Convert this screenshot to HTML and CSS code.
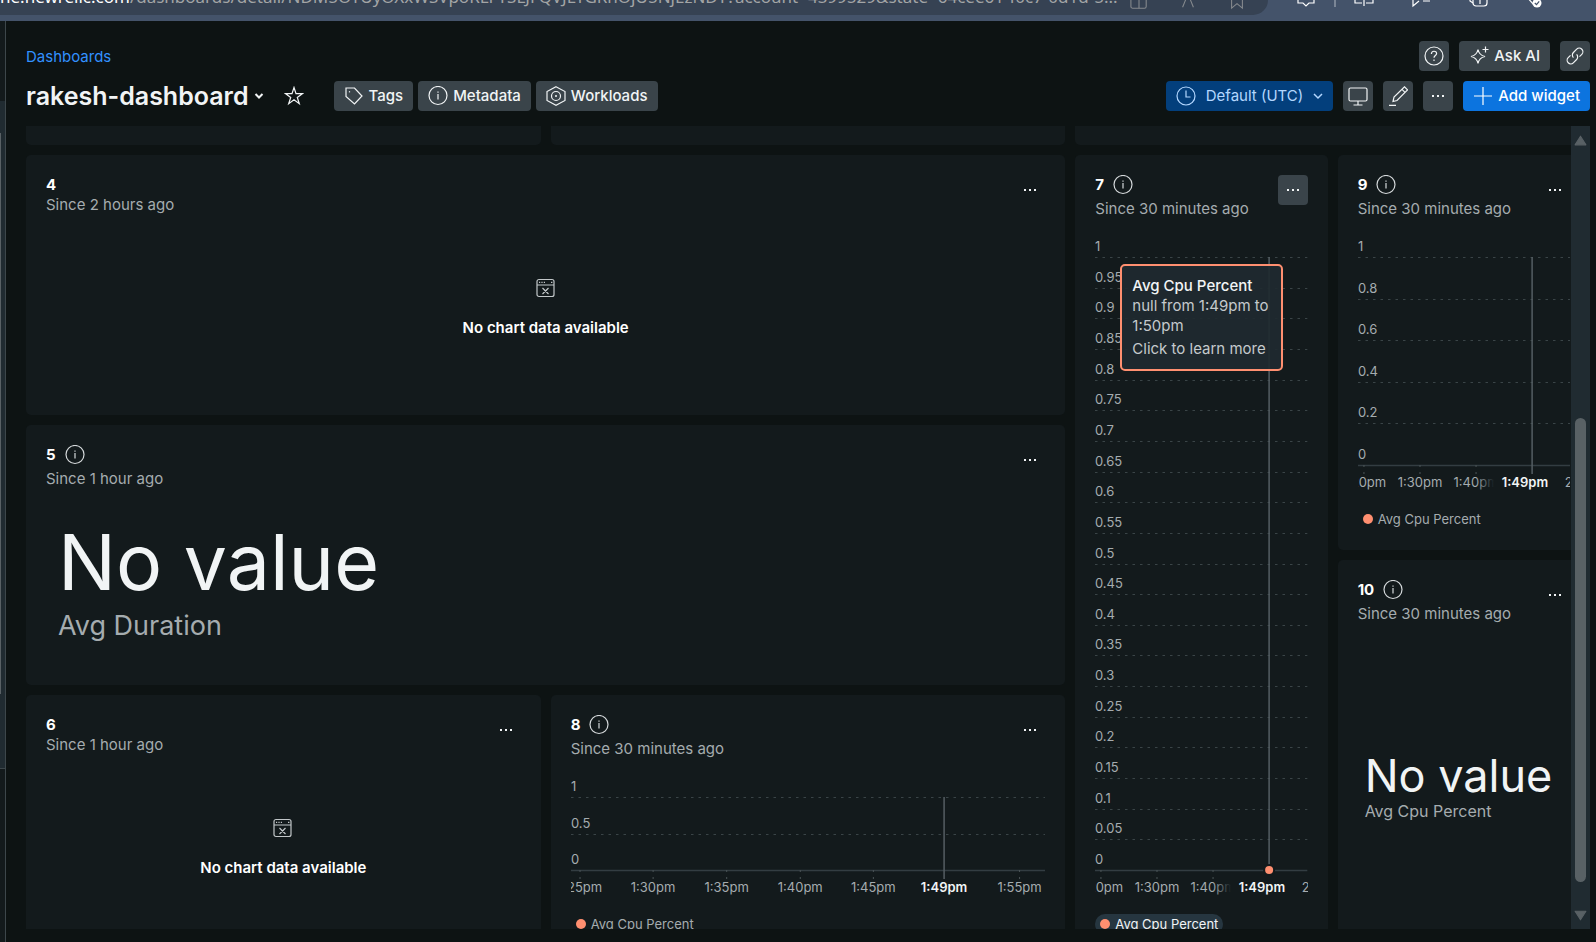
FILE: index.html
```html
<!DOCTYPE html>
<html lang="en">
<head>
<meta charset="utf-8">
<title>rakesh-dashboard</title>
<link rel="stylesheet" href="styles.css">
</head>
<body>
<svg class="defs" aria-hidden="true">
  <symbol id="info" viewBox="0 0 20 20"><circle cx="10" cy="9.500" r="9"/><path d="M10 8.100v5.400M10 5.500v1.200"/></symbol>
  <symbol id="dots" viewBox="0 0 20 20"><path class="solid" d="M4 9h2v2H4zM9 9h2v2H9zM14 9h2v2h-2z"/></symbol>
  <symbol id="nodata" viewBox="0 0 20 20"><rect x="1" y="1.500" width="17" height="17" rx="2"/><path d="M1 7h17M6.500 10l6 6M12.500 10l-6 6M3 4.300h1.200M5.400 4.300h1.200M7.800 4.300H9M15 4.300h1.400"/></symbol>
</svg>

<div class="browser">
  <div class="address">
    <span class="url"><b>ne.newrelic.com</b>/dashboards/detail/NDM5OTUyOXxWSVpoRLFYSLJFQVJLTGRhOjU5NjEzNDY?account=4399529&amp;state=64cee61-f0c7-0d1d-5...</span>
    <span class="address-icons">
      <svg class="ic" viewBox="0 0 20 20"><rect x="1" y="1" width="17" height="17" rx="2"/><path d="M10 1v17M1 8h17"/></svg>
      <svg class="ic" viewBox="0 0 20 20"><path d="M4 17L10 2l6 15"/></svg>
      <svg class="ic" viewBox="0 0 20 20"><path d="M4 1h12v17l-6-5-6 5z"/></svg>
    </span>
  </div>
  <div class="browser-icons">
    <svg class="ic" viewBox="0 0 20 20"><path d="M2 2v13h5l3 3 3-3h5V2"/></svg>
    <span class="bar-sep"></span>
    <svg class="ic" viewBox="0 0 20 20"><path d="M10 1v17M8 15H1V3M12 15h7V3"/></svg>
    <svg class="ic" viewBox="0 0 20 20"><path d="M2 2v16l6-5M12 13h7M12 9h7"/></svg>
    <svg class="ic" viewBox="0 0 20 20"><rect x="5" y="3" width="14" height="15" rx="3"/><path d="M2 5v8l3 2M12 7v9M8 11h8"/></svg>
    <svg class="ic" viewBox="0 0 20 20"><path d="M1 8l8 9"/><circle class="solid" cx="12" cy="15" r="4.500"/><path class="tick" d="M9.800 15l1.700 1.700 2.700-3.400"/></svg>
  </div>
</div>

<div class="app">
  <div class="rail"><div class="rail-top"></div><div class="rail-scroll"><span></span></div><div class="rail-end"></div></div>
  <main class="main">
    <header class="top">
      <div class="row">
        <a class="crumb" href="#">Dashboards</a>
        <div class="tools">
          <button class="btn square" aria-label="Help"><svg class="ic" viewBox="0 0 20 20"><circle cx="10" cy="10" r="9"/><path d="M7.400 8c0-3.600 5.200-3.600 5.200-.4 0 2-2.600 2-2.600 4.200M10 13.600v1.400"/></svg></button>
          <button class="btn"><svg class="ic" viewBox="0 0 20 20"><path d="M9 3.500c.8 4.300 2.600 6.100 7 7-4.400.9-6.200 2.700-7 7-.8-4.300-2.600-6.100-7-7 4.400-.9 6.200-2.700 7-7zM16.500.5v6M13.500 3.500h6"/></svg>Ask AI</button>
          <button class="btn square" aria-label="Copy link"><svg class="ic" viewBox="0 0 20 20"><path d="M8.400 11.600a3.600 3.600 0 0 1 0-5.100l3.300-3.300a3.600 3.600 0 0 1 5.100 5.100l-2.300 2.300M11.600 8.400a3.600 3.600 0 0 1 0 5.100l-3.300 3.300a3.600 3.600 0 0 1-5.100-5.100l2.300-2.300"/></svg></button>
        </div>
      </div>
      <div class="row">
        <div class="heading">
          <h1>rakesh-dashboard</h1>
          <svg class="caret" viewBox="0 0 10 10"><path d="M1.500 3L5 6.500 8.500 3"/></svg>
          <button class="star" aria-label="Favorite"><svg class="ic" viewBox="0 0 20 20"><path d="M10 1.500l2 6.100h6.500l-5.200 3.800 2 6.300-5.300-3.900-5.300 3.900 2-6.300L1.500 7.600H8z"/></svg></button>
          <div class="chips">
            <button class="btn"><svg class="ic" viewBox="0 0 20 20"><path d="M2 2h8.500l7.500 8-7.500 8L2 10.500z"/><path d="M5.500 5.200v1.200"/></svg>Tags</button>
            <button class="btn"><svg class="ic"><use href="#info"/></svg>Metadata</button>
            <button class="btn"><svg class="ic" viewBox="0 0 20 20"><path d="M10 .8l9 4.700v9l-9 4.700-9-4.700v-9z"/><circle cx="10" cy="10" r="4.500"/><circle class="solid" cx="10" cy="10" r="1"/></svg>Workloads</button>
          </div>
        </div>
        <div class="tools">
          <button class="btn time"><svg class="ic" viewBox="0 0 20 20"><circle cx="10" cy="10" r="9"/><path d="M10 4.500V11h4.500"/></svg><span>Default (UTC)</span><svg class="chev" viewBox="0 0 10 10"><path d="M1 3l4 4 4-4"/></svg></button>
          <button class="btn square" aria-label="TV mode"><svg class="ic" viewBox="0 0 20 20"><rect x="1" y="2" width="18" height="13" rx="1.500"/><path d="M10 15v4M5.500 19h9"/></svg></button>
          <button class="btn square" aria-label="Edit"><svg class="ic" viewBox="0 0 20 20"><path d="M5 15.500l1-4.500L16.500.8l3 3L9 14.500zM14 3.300l3 3M1 19.300h7"/></svg></button>
          <button class="btn square" aria-label="More"><svg class="ic"><use href="#dots"/></svg></button>
          <button class="btn primary"><svg class="ic" viewBox="0 0 20 20"><path d="M10 1v18M1 10h18"/></svg>Add widget</button>
        </div>
      </div>
    </header>

    <div class="board">
      <div class="grid">
        <section class="card stub"></section><section class="card stub"></section><section class="card stub"></section>

        <section class="card w4">
          <div class="head"><div><h2>4</h2><p>Since 2 hours ago</p></div><button class="menu" aria-label="Widget menu"><svg class="ic"><use href="#dots"/></svg></button></div>
          <div class="empty"><svg class="ic"><use href="#nodata"/></svg><strong>No chart data available</strong></div>
        </section>

        <section class="card w5">
          <div class="head"><div><h2>5 <svg class="ic"><use href="#info"/></svg></h2><p>Since 1 hour ago</p></div><button class="menu" aria-label="Widget menu"><svg class="ic"><use href="#dots"/></svg></button></div>
          <div class="billboard large"><span>No value</span><small>Avg Duration</small></div>
        </section>

        <section class="card w6">
          <div class="head"><div><h2>6</h2><p>Since 1 hour ago</p></div><button class="menu" aria-label="Widget menu"><svg class="ic"><use href="#dots"/></svg></button></div>
          <div class="empty"><svg class="ic"><use href="#nodata"/></svg><strong>No chart data available</strong></div>
        </section>

        <section class="card w8">
          <div class="head"><div><h2>8 <svg class="ic"><use href="#info"/></svg></h2><p>Since 30 minutes ago</p></div><button class="menu" aria-label="Widget menu"><svg class="ic"><use href="#dots"/></svg></button></div>
          <svg class="chart short" data-max="1" data-step="0.5" data-top="22" data-base="95" data-cross="78.6%"
            data-x='[["1:25pm","1.900%"],["1:30pm","17.300%"],["1:35pm","32.800%"],["1:40pm","48.300%"],["1:45pm","63.700%"],["1:49pm","78.600%","now"],["1:55pm","94.500%"]]'></svg>
          <div class="legend"><span class="key"><i></i>Avg Cpu Percent</span></div>
        </section>

        <section class="card w7">
          <div class="head"><div><h2>7 <svg class="ic"><use href="#info"/></svg></h2><p>Since 30 minutes ago</p></div><button class="menu active" aria-label="Widget menu"><svg class="ic"><use href="#dots"/></svg></button></div>
          <svg class="chart tall" data-max="1" data-step="0.05" data-top="22" data-base="635" data-cross="82%" data-dot="1"
            data-x='[["1:20pm","2.800%"],["1:30pm","29.200%"],["1:40pm","55.600%","fade"],["1:49pm","78.600%","now"],["2:00pm","108.500%"]]'></svg>
          <div class="legend"><span class="key on"><i></i>Avg Cpu Percent</span></div>
          <div class="tooltip" role="tooltip"><b>Avg Cpu Percent</b><span>null from 1:49pm to 1:50pm</span><em>Click to learn more</em></div>
        </section>

        <section class="card w9">
          <div class="head"><div><h2>9 <svg class="ic"><use href="#info"/></svg></h2><p>Since 30 minutes ago</p></div><button class="menu" aria-label="Widget menu"><svg class="ic"><use href="#dots"/></svg></button></div>
          <svg class="chart mid" data-max="1" data-step="0.2" data-top="22" data-base="230" data-cross="82%"
            data-x='[["1:20pm","2.800%"],["1:30pm","29.200%"],["1:40pm","55.600%","fade"],["1:49pm","78.600%","now"],["2:00pm","108.500%"]]'></svg>
          <div class="legend"><span class="key"><i></i>Avg Cpu Percent</span></div>
        </section>

        <section class="card w10">
          <div class="head"><div><h2>10 <svg class="ic"><use href="#info"/></svg></h2><p>Since 30 minutes ago</p></div><button class="menu" aria-label="Widget menu"><svg class="ic"><use href="#dots"/></svg></button></div>
          <div class="billboard"><span>No value</span><small>Avg Cpu Percent</small></div>
        </section>
      </div>
      <div class="scrollbar">
        <svg viewBox="0 0 12 10"><path d="M6 1l5 8H1z"/></svg>
        <div class="track"><span></span></div>
        <svg viewBox="0 0 12 10"><path d="M6 9L1 1h10z"/></svg>
      </div>
    </div>
  </main>
</div>
<script src="charts.js"></script>
</body>
</html>
```

FILE: styles.css
```css
* { box-sizing: border-box; }
body {
  margin: 0;
  height: 100vh;
  display: flex;
  flex-direction: column;
  overflow: hidden;
  background: #0d1313;
  color: #f1f4f5;
  font: 400 15px/20px Inter, "Liberation Sans", sans-serif;
}
h1, h2, p { margin: 0; }
button { font: inherit; color: inherit; border: 0; background: none; padding: 0; }
.defs { position: absolute; width: 0; height: 0; }
.ic { width: 20px; height: 20px; flex: none; fill: none; stroke: currentColor; stroke-width: 1.2; }
.solid { fill: currentColor; stroke: none; }

/* browser toolbar */
.browser { display: flex; flex: none; height: 21px; background: #44536a; }
.address {
  flex: 1;
  height: 15px;
  display: flex;
  justify-content: space-between;
  align-items: flex-end;
  overflow: hidden;
  background: #364253;
  border-bottom-right-radius: 16px;
  color: #a3a5a6;
}
.url { font: 17px/24px "Noto Sans", "Open Sans", sans-serif; white-space: nowrap; padding-bottom: 6px; }
.url b { font-weight: 400; color: #fff; }
.address-icons { display: flex; gap: 31px; padding-right: 22px; color: #85898d; }
.address-icons .ic { width: 18px; height: 28px; }
.browser-icons {
  display: flex;
  align-items: flex-start;
  gap: 37px;
  width: 328px;
  height: 8px;
  padding-left: 28px;
  color: #fff;
}
.browser-icons .ic { margin-top: -12px; }
.bar-sep { width: 2px; height: 7px; background: #7b8696; margin: 0 -19px; }
.tick { stroke: #44536a; }

/* app frame */
.app { flex: 1; display: flex; min-height: 0; }
.rail { width: 6px; flex: none; display: flex; flex-direction: column; border-right: 1px solid #3d474b; }
.rail-top { height: 80px; background: #131a1c; }
.rail-scroll { height: 668px; background: #202b31; border-bottom: 1px solid #3d474b; padding: 32px 0 74px; }
.rail-scroll span { display: block; width: 1px; height: 100%; background: #596165; }
.rail-end { flex: 1; background: #131a1c; }
.main { flex: 1; min-width: 0; display: flex; flex-direction: column; padding: 20px 6px 13px 20px; }
.top { display: flex; flex-direction: column; gap: 10px; margin-bottom: 15px; }
.row { display: flex; justify-content: space-between; align-items: center; }
.tools, .chips, .heading { display: flex; align-items: center; }
.tools { gap: 10px; }
.chips { gap: 5px; margin-left: 30px; }
.crumb { padding-top: 2px; color: #3291ff; text-decoration: none; }
h1 { font-size: 25px; line-height: 30px; font-weight: 600; }
.caret { width: 10px; height: 10px; margin: 0 20px 0 5px; fill: none; stroke: currentColor; stroke-width: 2; }
.star { display: flex; }
.btn {
  display: flex;
  align-items: center;
  gap: 5px;
  height: 30px;
  padding: 0 10px;
  border-radius: 4px;
  background: #3a444a;
  font-weight: 500;
}
.btn.square { width: 30px; padding: 0 5px; }
.btn.primary { background: #0c74df; color: #fff; }
.btn.time { background: #033f7c; color: #b3d7ff; font-weight: 400; gap: 10px; }
.chev { width: 10px; height: 10px; fill: none; stroke: currentColor; stroke-width: 1.5; }

/* widget board */
.board { position: relative; flex: 1; min-height: 0; overflow: hidden; }
.grid {
  display: grid;
  grid-template-columns: repeat(6, minmax(0, 1fr));
  grid-template-rows: 19px repeat(6, 125px);
  gap: 10px;
}
.card { position: relative; display: flex; flex-direction: column; padding: 20px; border-radius: 5px; background: #131a1c; }
.stub { grid-column: span 2; border-radius: 0 0 5px 5px; padding: 0; }
.w4 { grid-area: 2 / 1 / span 2 / span 4; }
.w5 { grid-area: 4 / 1 / span 2 / span 4; }
.w6 { grid-area: 6 / 1 / span 2 / span 2; }
.w8 { grid-area: 6 / 3 / span 2 / span 2; }
.w7 { grid-area: 2 / 5 / span 6 / span 1; }
.w9 { grid-area: 2 / 6 / span 3 / span 1; }
.w10 { grid-area: 5 / 6 / span 3 / span 1; }
.head { display: flex; justify-content: space-between; align-items: flex-start; height: 40px; white-space: nowrap; }
.head p { color: #a5acaf; }
h2 { display: flex; gap: 9px; font-size: 15px; line-height: 20px; font-weight: 700; color: #fff; }
h2:has(svg) { margin-bottom: 4px; }
h2 .ic { color: #d5d9db; }
.menu { width: 30px; height: 30px; padding: 5px; border-radius: 4px; flex: none; }
.menu.active { background: #3a444a; }

.empty { flex: 1; display: flex; flex-direction: column; align-items: center; gap: 20px; padding-top: 63px; }
.empty .ic { color: #c2c7c9; }
.empty strong { font-weight: 600; color: #fff; }

.billboard {
  flex: 1;
  display: flex;
  flex-direction: column;
  justify-content: center;
  padding: 16px 7px 0;
  white-space: nowrap;
}
.billboard span { font-size: 45px; line-height: 50px; }
.billboard small { font-size: 16px; line-height: 20px; color: #a5acaf; }
.billboard.large { padding: 8px 12px 0; }
.billboard.large span { font-size: 77px; line-height: 94px; }
.billboard.large small { font-size: 27px; line-height: 34px; }

/* charts */
.chart { width: 100%; flex: none; margin-top: 20px; overflow: hidden; }
.tall { height: 670px; }
.mid { height: 265px; }
.short { height: 130px; }
.chart text { font-size: 13px; fill: #a5acaf; }
.chart .x { text-anchor: middle; }
.chart .now { fill: #f1f4f5; font-weight: 600; }
.chart .gridline { stroke: #3a4447; stroke-width: 1; stroke-dasharray: 2.5 5; }
.chart .axis { stroke: #333d42; stroke-width: 1.5; }
.chart .mark { stroke: #4b5457; stroke-width: 1; stroke-dasharray: 2 5; }
.chart .cross { stroke: #555e63; stroke-width: 1.5; }
.chart .dot { fill: #ff8f70; stroke: #131a1c; stroke-width: 4; paint-order: stroke; }
.legend { margin-top: 9px; display: flex; font-size: 13px; white-space: nowrap; color: #a5acaf; }
.key { display: flex; align-items: center; gap: 5px; padding: 0 5px; border-radius: 10px; }
.key i { width: 10px; height: 10px; border-radius: 50%; background: #ff8f70; }
.key.on { background: #263640; color: #f1f4f5; }

.tooltip {
  position: absolute;
  top: 109px;
  left: 45px;
  width: 163px;
  padding: 10px;
  border: 2px solid #ff8f70;
  border-radius: 5px;
  background: rgba(31, 42, 47, .93);
  color: #c5cacc;
}
.tooltip b, .tooltip span, .tooltip em { display: block; font-style: normal; white-space: normal; }
.tooltip span { margin-right: -5px; }
.tooltip b { font-weight: 500; color: #f1f4f5; }
.tooltip em { margin-top: 3px; }

/* scrollbar over the right edge of the board */
.scrollbar {
  position: absolute;
  inset: 0 0 0 auto;
  width: 19px;
  padding: 9px 3px 8px;
  display: flex;
  flex-direction: column;
  align-items: center;
  background: #202b31;
}
.scrollbar svg { width: 13px; height: 11px; fill: #596165; stroke: #596165; stroke-width: 1; stroke-linejoin: round; flex: none; }
.track { flex: 1; display: flex; flex-direction: column; justify-content: flex-end; padding-bottom: 28px; }
.track span { width: 11px; height: 63%; border-radius: 6px; background: #596165; }
```

FILE: charts.js
```js
const NS = "http://www.w3.org/2000/svg";

function add(parent, tag, attrs, text) {
  const el = document.createElementNS(NS, tag);
  for (const k in attrs) el.setAttribute(k, attrs[k]);
  if (text !== undefined) el.textContent = text;
  parent.appendChild(el);
  return el;
}

document.querySelectorAll(".chart").forEach((svg, n) => {
  const d = svg.dataset;
  const top = +d.top, base = +d.base, max = +d.max, step = +d.step;
  const count = Math.round(max / step);
  for (let i = 0; i <= count; i++) {
    const y = Math.round(top + (base - top) * i / count) + 0.5;
    const value = +((count - i) * step).toFixed(2);
    add(svg, "text", { x: 0, y: y - 7 }, value);
    add(svg, "line", { class: i === count ? "axis" : "gridline", x1: 0, x2: "100%", y1: y, y2: y });
  }
  const fade = add(svg, "linearGradient", { id: "fade" + n });
  add(fade, "stop", { offset: "50%", "stop-color": "#a5acaf" });
  add(fade, "stop", { offset: "90%", "stop-color": "#131a1c" });
  JSON.parse(d.x).forEach(([label, x, kind]) => {
    if (kind !== "now") add(svg, "line", { class: "mark", x1: x, x2: x, y1: base, y2: base + 9 });
    const t = add(svg, "text", { class: "x " + (kind || ""), x, y: base + 22 }, label);
    if (kind === "fade") t.style.fill = `url(#fade${n})`;
  });
  add(svg, "line", { class: "cross", x1: d.cross, x2: d.cross, y1: top, y2: d.dot ? base : base + 9 });
  if (d.dot) add(svg, "circle", { class: "dot", cx: d.cross, cy: base, r: 4 });
});
```
